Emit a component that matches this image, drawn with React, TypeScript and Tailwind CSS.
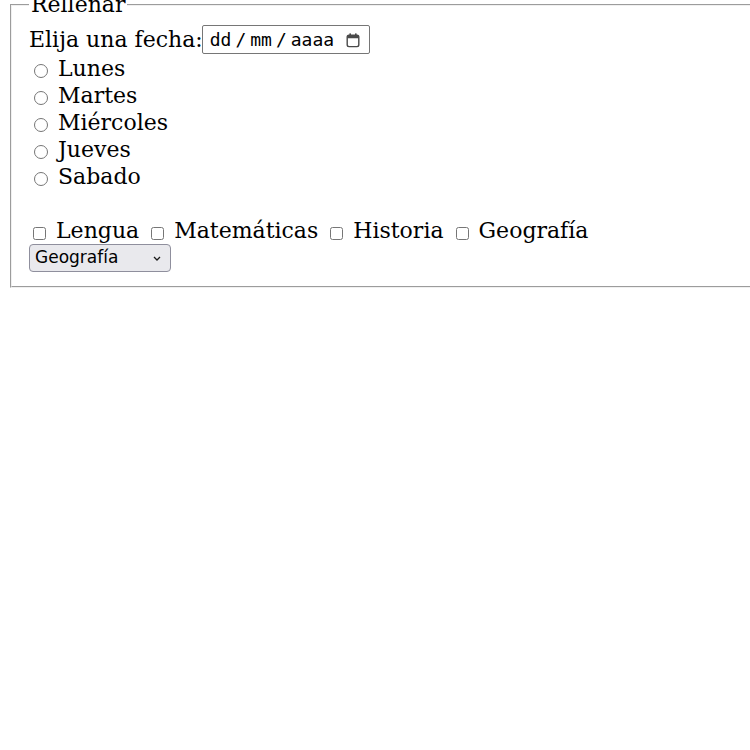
const dias = ['Lunes', 'Martes', 'Miércoles', 'Jueves', 'Sabado']
const materias = ['Lengua', 'Matemáticas', 'Historia', 'Geografía']

function CalendarIcon() {
  return (
    <svg width="16" height="16" viewBox="0 0 16 16" fill="none">
      <rect x="2.2" y="3.2" width="11.6" height="11.4" rx="1.8" stroke="#4a4a4a" strokeWidth="1.4" />
      <rect x="2.2" y="3.2" width="11.6" height="3" rx="1" fill="#4a4a4a" />
      <rect x="4.4" y="1.4" width="1.6" height="3" fill="#4a4a4a" />
      <rect x="10" y="1.4" width="1.6" height="3" fill="#4a4a4a" />
    </svg>
  )
}

function DateBox() {
  return (
    <div className="-ml-[1px] flex h-[29px] w-[168px] items-center rounded-[2px] border border-[#767676] pl-[7px] pr-[8px] font-['DejaVu_Sans_Mono',monospace] text-[18px] leading-none">
      <span>dd</span>
      <span className="mx-[4px]">/</span>
      <span>mm</span>
      <span className="mx-[4px]">/</span>
      <span>aaaa</span>
      <span className="ml-auto flex items-center"><CalendarIcon /></span>
    </div>
  )
}

export default function App() {
  return (
    <div className="h-[750px] w-[750px] overflow-hidden bg-white text-black font-['DejaVu_Serif',serif] text-[22px]">
      <fieldset className="-mt-[8px] ml-[10px] w-[800px] border-2 border-[#f0f0f0] [border-style:groove] pl-[17px] pt-[6px] pb-[14px]">
        <legend className="px-[2px] leading-[26px]">Rellenar</legend>

        <div className="flex h-[31px] items-center">
          <label>Elija una fecha:</label>
          <DateBox />
        </div>

        {dias.map((d) => (
          <label key={d} className="flex h-[27px] items-center">
            <input type="radio" name="dia" className="ml-[5px] mr-[10px] mt-[4px] h-[14px] w-[14px]" />
            <span>{d}</span>
          </label>
        ))}

        <div className="h-[27px]" />

        <div className="flex h-[27px] items-center">
          {materias.map((m, i) => (
            <label key={m} className={i === 0 ? 'ml-[4px] flex items-center' : 'ml-[12px] flex items-center'}>
              <input type="checkbox" className="mr-[10px] mt-[6px]" />
              <span>{m}</span>
            </label>
          ))}
        </div>

        <div className="relative flex w-[142px]">
          <select
            defaultValue="Geografía"
            className="block h-[28px] w-[142px] appearance-none rounded-[4px] border border-[#8f8f9d] bg-[#e9e9ed] pl-[5px] font-['DejaVu_Sans',sans-serif] text-[17px] text-black"
          >
            {materias.map((m) => (
              <option key={m}>{m}</option>
            ))}
          </select>
          <svg className="pointer-events-none absolute right-[10px] top-[12px]" width="8" height="5" viewBox="0 0 8 5" fill="none">
            <path d="M1 1l3 3 3-3" stroke="#1a1a1a" strokeWidth="1.3" />
          </svg>
        </div>
      </fieldset>
    </div>
  )
}
